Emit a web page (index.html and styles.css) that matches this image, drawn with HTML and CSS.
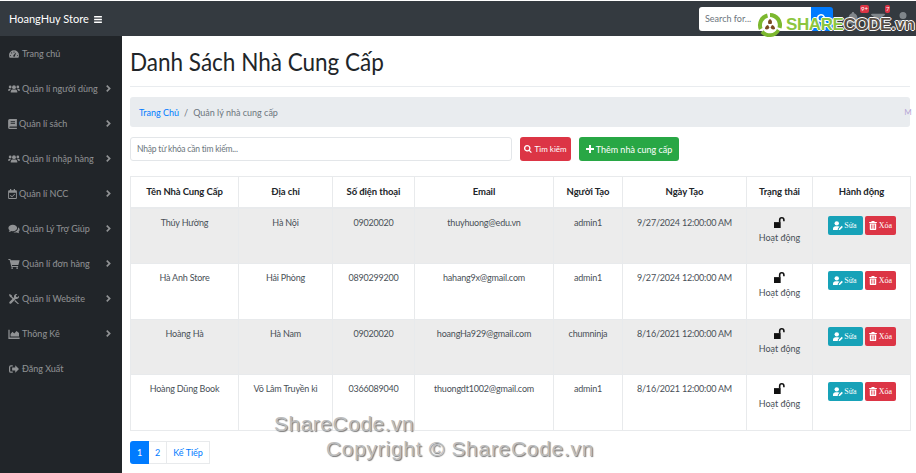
FILE: index.html
```html
<!DOCTYPE html>
<html lang="en">
<head>
    <meta charset="UTF-8">
    <meta name="viewport" content="width=device-width, initial-scale=1.0">
    <title>Danh Sách Nhà Cung Cấp</title>
    <link rel="stylesheet" href="styles.css">
</head>
<body>
    <svg class="sprites" width="0" height="0">
        <symbol id="i-gauge" viewBox="0 0 16 16"><path d="M8 2a8 8 0 0 0-8 8c0 1.500.4 2.800 1 4h14c.6-1.200 1-2.500 1-4a8 8 0 0 0-8-8zm-.7 1.800h1.400v2H7.300zM3 10.800H1.500V9.400H3zm1.400-3.400-1.400-1.400 1-1 1.400 1.400zM9.300 12a1.500 1.500 0 0 1-2.600-1.200L10.500 6l.6.300-1.800 5.700zm5.200-1.200H13V9.400h1.500z"/></symbol>
        <symbol id="i-users" viewBox="0 0 20 16"><circle cx="10" cy="5" r="3.200"/><circle cx="3.600" cy="4.600" r="2.300"/><circle cx="16.400" cy="4.600" r="2.300"/><path d="M4.500 14v-1.500C4.500 10 6.500 9 8 9h4c1.500 0 3.500 1 3.500 3.500V14zM0 11c0-2 1-3.500 3-3.500 1 0 1.600.3 2 .7-1 .8-1.800 1.800-1.900 2.800zM20 11c0-2-1-3.500-3-3.500-1 0-1.600.3-2 .7 1 .8 1.800 1.800 1.900 2.800z"/></symbol>
        <symbol id="i-book" viewBox="0 0 14 16"><path d="M2.500 0H14v12H3a1 1 0 0 0 0 2h11v2H2.500A2.500 2.500 0 0 1 0 13.500v-11A2.500 2.500 0 0 1 2.500 0zM4 3v1.500h7V3zm0 3v1.500h7V6z"/></symbol>
        <symbol id="i-check" viewBox="0 0 14 16"><path d="M3 0h2v2h4V0h2v2h1.500A1.500 1.500 0 0 1 14 3.500v11a1.500 1.500 0 0 1-1.500 1.500h-11A1.500 1.500 0 0 1 0 14.500v-11A1.500 1.500 0 0 1 1.500 2H3zM1.500 6v8.500h11V6zm8.700 1.400 1 1-4.900 4.800L3 10.700l1-1 2.300 1.700z"/></symbol>
        <symbol id="i-chat" viewBox="0 0 18 16"><path d="M7 1c3.900 0 7 2.300 7 5.200s-3.100 5.200-7 5.200c-.8 0-1.500-.1-2.200-.3C3.500 12 2 12.500.5 12.500c.8-.8 1.300-1.700 1.400-2.600C.7 8.900 0 7.600 0 6.200 0 3.300 3.100 1 7 1z"/><path d="M15.300 5.200C17 6 18 7.500 18 9c0 1.300-.7 2.500-1.800 3.400.1.800.6 1.600 1.300 2.300-1.300 0-2.700-.5-3.800-1.300-.6.200-1.300.3-2 .3-1.400 0-2.700-.4-3.700-1 4.300-.1 7.500-3 7.500-6.500z"/></symbol>
        <symbol id="i-cart" viewBox="0 0 18 16"><path d="M0 0h3.200l.5 2H18l-2 7.500H5.600l.4 1.700h9.600v1.500H4.800L2 1.500H0z"/><circle cx="6" cy="14.500" r="1.500"/><circle cx="14" cy="14.500" r="1.500"/></symbol>
        <symbol id="i-tools" viewBox="0 0 16 16"><path d="M1 0l3.500 2v1.700l3 3-1.500 1.500-3-3H2L0 1.500zM12 0c.5 0 .9.100 1.300.2L11 2.500 11.500 4.500l2 .5 2.300-2.300c.1.400.2.800.2 1.300a4 4 0 0 1-5.300 3.800L3.500 15a1.700 1.700 0 0 1-2.500-2.500l7.200-7.200A4 4 0 0 1 12 0zM10 9.500l5.500 5.500a.7.700 0 0 1 0 1h-1.500L8.500 11z"/></symbol>
        <symbol id="i-chart" viewBox="0 0 18 16"><path d="M0 1h2v12.500h16V16H0zM3.500 12V8l3-3.500 3 2.500L13 3l4 3.500V12z"/></symbol>
        <symbol id="i-out" viewBox="0 0 16 16"><path d="M6 2H3a3 3 0 0 0-3 3v6a3 3 0 0 0 3 3h3v-2H3a1 1 0 0 1-1-1V5a1 1 0 0 1 1-1h3zM10 2l6 6-6 6v-3.500H5v-5h5z"/></symbol>
        <symbol id="i-chev" viewBox="0 0 8 12"><path d="M2 0 8 6l-6 6-2-2 4-4-4-4z"/></symbol>
        <symbol id="i-search" viewBox="0 0 16 16"><path d="M6.500 0a6.500 6.500 0 0 1 5.200 10.400l4 4-1.800 1.600-4-4A6.500 6.500 0 1 1 6.500 0zm0 2.500a4 4 0 1 0 0 8 4 4 0 0 0 0-8z"/></symbol>
        <symbol id="i-plus" viewBox="0 0 14 14"><path d="M5.300 0h3.400v5.300H14v3.400H8.700V14H5.300V8.700H0V5.300h5.300z"/></symbol>
        <symbol id="i-lock" viewBox="0 0 14 14"><path d="M0 6.500h8.500V14H0z"/><path d="M6.200 6.800V3.700a3.700 3.700 0 0 1 7.400 0v1.600h-2V3.700a1.700 1.700 0 0 0-3.400 0v3.100z"/></symbol>
        <symbol id="i-edit" viewBox="0 0 16 14"><circle cx="6" cy="3.500" r="3.500"/><path d="M0 14v-2c0-2.500 2-4 4-4h4c1 0 1.800.3 2.500.8L8 11.500l-.5 2.500zM9 14l.4-2 4.600-4.600 1.800 1.800L11 14z"/></symbol>
        <symbol id="i-trash" viewBox="0 0 12 14"><path d="M4 0h4l.7 1.500H12V3H0V1.500h3.300zM1 4h10v9a1 1 0 0 1-1 1H2a1 1 0 0 1-1-1zm2 1.500V12h1V5.500zm2.500 0V12h1V5.500zm2.500 0V12h1V5.500z"/></symbol>
        <symbol id="i-bars" viewBox="0 0 10 9"><path d="M0 0h10v1.800H0zM0 3.600h10v1.800H0zM0 7.200h10V9H0z"/></symbol>
        <symbol id="i-bell" viewBox="0 0 14 16"><path d="M7 0c.8 0 1.300.6 1.300 1.300C10.700 2 12 4 12 6.500c0 3 1 4.500 2 5.500v1H0v-1c1-1 2-2.500 2-5.500C2 4 3.300 2 5.700 1.300 5.700.6 6.200 0 7 0zM5 14h4a2 2 0 0 1-4 0z"/></symbol>
        <symbol id="i-mail" viewBox="0 0 16 12"><path d="M0 1.500A1.500 1.500 0 0 1 1.500 0h13A1.500 1.500 0 0 1 16 1.500L8 6.500 0 1.500zM0 3.500l8 5 8-5v7a1.500 1.500 0 0 1-1.500 1.500h-13A1.500 1.500 0 0 1 0 10.500z"/></symbol>
        <symbol id="i-user" viewBox="0 0 14 16"><path d="M7 0a4 4 0 1 1 0 8 4 4 0 0 1 0-8zM3 9h8a3 3 0 0 1 3 3v4H0v-4a3 3 0 0 1 3-3z"/></symbol>
    </svg>

    <header class="topbar">
        <div class="brand">HoangHuy Store <svg class="bars"><use href="#i-bars"/></svg></div>
        <div class="topsearch">
            <span class="topsearch-input">Search for...</span>
            <span class="topsearch-btn"><svg><use href="#i-search"/></svg></span>
        </div>
        <div class="topicons">
            <span class="top-icon"><svg><use href="#i-bell"/></svg><span class="badge">9+</span></span>
            <span class="top-icon"><svg><use href="#i-mail"/></svg><span class="badge">7</span></span>
            <span class="top-icon"><svg><use href="#i-user"/></svg></span>
        </div>
    </header>

    <div class="main">
        <nav class="sidebar">
            <a class="nav-item"><svg class="nav-icon"><use href="#i-gauge"/></svg>Trang chủ</a>
            <a class="nav-item"><svg class="nav-icon"><use href="#i-users"/></svg>Quản lí người dùng<svg class="chev"><use href="#i-chev"/></svg></a>
            <a class="nav-item"><svg class="nav-icon narrow"><use href="#i-book"/></svg>Quản lí sách<svg class="chev"><use href="#i-chev"/></svg></a>
            <a class="nav-item"><svg class="nav-icon"><use href="#i-users"/></svg>Quản lí nhập hàng<svg class="chev"><use href="#i-chev"/></svg></a>
            <a class="nav-item"><svg class="nav-icon narrow"><use href="#i-check"/></svg>Quản lí NCC<svg class="chev"><use href="#i-chev"/></svg></a>
            <a class="nav-item"><svg class="nav-icon"><use href="#i-chat"/></svg>Quản Lý Trợ Giúp<svg class="chev"><use href="#i-chev"/></svg></a>
            <a class="nav-item"><svg class="nav-icon"><use href="#i-cart"/></svg>Quản lí đơn hàng<svg class="chev"><use href="#i-chev"/></svg></a>
            <a class="nav-item"><svg class="nav-icon"><use href="#i-tools"/></svg>Quản lí Website<svg class="chev"><use href="#i-chev"/></svg></a>
            <a class="nav-item"><svg class="nav-icon"><use href="#i-chart"/></svg>Thông Kê<svg class="chev"><use href="#i-chev"/></svg></a>
            <a class="nav-item"><svg class="nav-icon"><use href="#i-out"/></svg>Đăng Xuất</a>
        </nav>

        <section class="content">
            <h1 class="title"><span class="title-text">Danh Sách Nhà Cung Cấp</span></h1>
            <ol class="breadcrumb">
                <li class="crumb-link">Trang Chủ</li>
                <li class="crumb-sep">/</li>
                <li>Quản lý nhà cung cấp</li>
            </ol>

            <div class="filter">
                <div class="filter-input">Nhập từ khóa cần tìm kiếm...</div>
                <button class="btn btn-find"><svg><use href="#i-search"/></svg>Tìm kiếm</button>
                <button class="btn btn-add"><svg><use href="#i-plus"/></svg>Thêm nhà cung cấp</button>
            </div>

            <table class="list">
                <colgroup>
                    <col class="c-name"><col class="c-addr"><col class="c-phone"><col class="c-mail"><col class="c-user"><col class="c-date"><col class="c-status"><col class="c-act">
                </colgroup>
                <thead>
                    <tr><th>Tên Nhà Cung Cấp</th><th>Địa chỉ</th><th>Số điện thoại</th><th>Email</th><th>Người Tạo</th><th>Ngày Tạo</th><th>Trạng thái</th><th>Hành động</th></tr>
                </thead>
                <tbody>
                    <tr class="odd">
                        <td>Thúy Hường</td><td>Hà Nội</td><td>09020020</td><td>thuyhuong@edu.vn</td><td>admin1</td><td>9/27/2024 12:00:00 AM</td>
                        <td class="cell-tight"><svg class="lock"><use href="#i-lock"/></svg><div>Hoạt động</div></td>
                        <td class="cell-tight"><div class="acts"><button class="mini mini-edit"><svg><use href="#i-edit"/></svg>Sửa</button><button class="mini mini-del"><svg><use href="#i-trash"/></svg>Xóa</button></div></td>
                    </tr>
                    <tr>
                        <td>Hà Anh Store</td><td>Hải Phòng</td><td>0890299200</td><td>hahang9x@gmail.com</td><td>admin1</td><td>9/27/2024 12:00:00 AM</td>
                        <td class="cell-tight"><svg class="lock"><use href="#i-lock"/></svg><div>Hoạt động</div></td>
                        <td class="cell-tight"><div class="acts"><button class="mini mini-edit"><svg><use href="#i-edit"/></svg>Sửa</button><button class="mini mini-del"><svg><use href="#i-trash"/></svg>Xóa</button></div></td>
                    </tr>
                    <tr class="odd">
                        <td>Hoàng Hà</td><td>Hà Nam</td><td>09020020</td><td>hoangHa929@gmail.com</td><td>chumninja</td><td>8/16/2021 12:00:00 AM</td>
                        <td class="cell-tight"><svg class="lock"><use href="#i-lock"/></svg><div>Hoạt động</div></td>
                        <td class="cell-tight"><div class="acts"><button class="mini mini-edit"><svg><use href="#i-edit"/></svg>Sửa</button><button class="mini mini-del"><svg><use href="#i-trash"/></svg>Xóa</button></div></td>
                    </tr>
                    <tr>
                        <td>Hoàng Dũng Book</td><td>Võ Lâm Truyền kì</td><td>0366089040</td><td>thuongdt1002@gmail.com</td><td>admin1</td><td>8/16/2021 12:00:00 AM</td>
                        <td class="cell-tight"><svg class="lock"><use href="#i-lock"/></svg><div>Hoạt động</div></td>
                        <td class="cell-tight"><div class="acts"><button class="mini mini-edit"><svg><use href="#i-edit"/></svg>Sửa</button><button class="mini mini-del"><svg><use href="#i-trash"/></svg>Xóa</button></div></td>
                    </tr>
                </tbody>
            </table>

            <div class="pager">
                <span class="page active">1</span><span class="page">2</span><span class="page">Kế Tiếp</span>
            </div>
        </section>
    </div>

    <!-- watermark sits over the page -->
    <div class="logo">
        <svg class="logo-mark" viewBox="0 0 28 28">
            <circle cx="14" cy="14" r="10.500" fill="#fff"/>
            <path d="M14 2a12 12 0 0 1 11.500 15.500l-4-1.200A8 8 0 0 0 14 6z" fill="#7cb82f"/>
            <path d="M24 20a12 12 0 0 1-19.500 2l3-2.800A8 8 0 0 0 21 18z" fill="#7cb82f"/>
            <path d="M3 19A12 12 0 0 1 11 2.500l1 4A8 8 0 0 0 6.500 17z" fill="#7cb82f"/>
            <path d="M14 8c2 1 2.500 3 1.500 5h-3C11.500 11 12 9 14 8zM9 18c0-2 1-3.500 3-4l1.500 2.500C12.500 18.500 11 19 9 18zM19 18c-2 1-3.500.5-4.500-1.500L16 14c2 .5 3 2 3 4z" fill="#7a4a22"/>
        </svg>
        <span class="logo-share">SHARE</span><span class="logo-code">CODE.vn</span>
    </div>
    <div class="mark mark-1">ShareCode.vn</div>
    <div class="mark mark-2">Copyright © ShareCode.vn</div>
    <div class="corner-tag">M</div>
</body>
</html>
```

FILE: styles.css
```css
* {
    margin: 0;
    padding: 0;
    box-sizing: border-box;
}

body {
    background: #fff;
    color: #212529;
    font-family: Lato, "Noto Sans", sans-serif;
    font-size: 9px;
    height: 473px;
    overflow: hidden;
}

.sprites {
    position: absolute;
}

svg {
    fill: currentColor;
}

/* top bar */
.topbar {
    height: 35px;
    margin-top: 1px;
    background: #343a40;
    display: flex;
    align-items: center;
    padding: 0 0 0 9px;
}

.brand {
    color: #fff;
    font-size: 11px;
    flex: 1;
}

.bars {
    width: 8px;
    height: 7px;
    margin-left: 2px;
}

.topsearch {
    display: flex;
    width: 134px;
    height: 24px;
    margin-right: 13px;
}

.topsearch-input {
    flex: 1;
    background: #fff;
    color: #6c757d;
    border-radius: 3px 0 0 3px;
    padding: 6px 6px;
}

.topsearch-btn {
    width: 22px;
    background: #007bff;
    color: #fff;
    border-radius: 0 3px 3px 0;
    display: flex;
    align-items: center;
    justify-content: center;
}

.topsearch-btn svg {
    width: 10px;
    height: 10px;
}

.topicons {
    width: 70px;
    display: flex;
    gap: 11px;
    align-self: stretch;
    align-items: center;
}

.top-icon {
    position: relative;
    width: 14px;
    height: 14px;
    color: #80868b;
}

.top-icon svg {
    width: 14px;
    height: 14px;
}

.badge {
    position: absolute;
    top: -7px;
    left: 14px;
    background: #dc3545;
    color: #fff;
    font-size: 6px;
    line-height: 8px;
    padding: 0 1px;
    border-radius: 2px;
}

/* sidebar */
.main {
    display: flex;
    height: 437px;
}

.sidebar {
    width: 122px;
    background: #212529;
    flex: none;
}

.nav-item {
    height: 35px;
    display: flex;
    align-items: center;
    padding-left: 8px;
    color: rgba(255, 255, 255, 0.5);
    white-space: nowrap;
}

.nav-icon {
    width: 12px;
    height: 10px;
    margin-right: 2px;
    flex: none;
}

.nav-icon.narrow {
    width: 9px;
}

.chev {
    width: 5px;
    height: 7px;
    position: absolute;
    left: 106px;
}

/* content */
.content {
    flex: 1;
    padding: 0 6px 0 8px;
    min-width: 0;
}

.title {
    font-size: 25px;
    font-weight: 400;
    line-height: 50px;
    height: 51px;
    border-bottom: 1px solid #e9ecef;
}

/* the heading in the shot is squeezed, no installed font is that narrow */
.title-text {
    display: inline-block;
    transform: scaleX(0.9);
    transform-origin: left center;
    white-space: nowrap;
}

.breadcrumb {
    list-style: none;
    display: flex;
    align-items: center;
    gap: 5px;
    margin-top: 10px;
    height: 30px;
    background: #e9ecef;
    border-radius: 3px;
    padding: 0 9px;
    color: #6c757d;
}

.crumb-link {
    color: #007bff;
}

.filter {
    display: flex;
    margin-top: 10px;
    height: 24px;
}

.filter-input {
    width: 382px;
    border: 1px solid #e3e6e9;
    border-radius: 3px;
    padding: 6px 6px;
    color: #6c757d;
    font-size: 8.500px;
    letter-spacing: -0.2px;
}

.btn {
    height: 24px;
    border: 0;
    border-radius: 3px;
    color: #fff;
    font-family: inherit;
    font-size: 8px;
    display: flex;
    align-items: center;
    justify-content: center;
}

.btn svg {
    width: 8px;
    height: 8px;
    margin-right: 2px;
}

.btn-find {
    width: 51px;
    margin-left: 8px;
    background: #dc3545;
}

.btn-add {
    width: 100px;
    margin-left: 8px;
    background: #28a745;
    font-size: 9px;
}

/* table */
.list {
    margin-top: 15px;
    width: 780px;
    table-layout: fixed;
    border-collapse: collapse;
    text-align: center;
}

.c-name { width: 108px; }
.c-addr { width: 94px; }
.c-phone { width: 82px; }
.c-mail { width: 139px; }
.c-user { width: 69px; }
.c-date { width: 124px; }
.c-status { width: 66px; }
.c-act { width: 98px; }

.list th,
.list td {
    border: 1px solid #e8eaec;
    vertical-align: top;
    font-weight: 400;
}

.list th {
    height: 31px;
    font-size: 9.500px;
    font-weight: 700;
    letter-spacing: -0.1px;
    vertical-align: middle;
    border-bottom-width: 2px;
}

.list td {
    height: 55.750px;
    padding-top: 8px;
    color: #495057;
    letter-spacing: -0.2px;
}

.list td.cell-tight {
    padding-top: 7px;
    letter-spacing: 0;
}

.list tr.odd td {
    background: #ececec;
}

.lock {
    display: block;
    width: 11px;
    height: 11px;
    margin: 1px auto 4px;
    color: #111;
}

.acts {
    display: flex;
    justify-content: center;
    gap: 2px;
}

.mini {
    height: 19px;
    border: 0;
    border-radius: 2px;
    color: #fff;
    font-family: "Liberation Serif", serif;
    font-size: 8px;
    display: flex;
    align-items: center;
    justify-content: center;
    gap: 1px;
}

.mini svg {
    width: 10px;
    height: 9px;
}

.mini-edit {
    width: 35px;
    background: #17a2b8;
}

.mini-del {
    width: 31px;
    background: #dc3545;
}

/* pagination */
.pager {
    display: flex;
    margin-top: 10px;
    height: 23px;
}

.page {
    border: 1px solid #e8eaec;
    border-left-width: 0;
    color: #007bff;
    padding: 0 6px;
    line-height: 21px;
}

.page.active {
    width: 19px;
    background: #007bff;
    border: 0;
    color: #fff;
    border-radius: 3px 0 0 3px;
    text-align: center;
    line-height: 23px;
}

/* watermarks */
.logo {
    position: absolute;
    left: 756px;
    top: 11px;
    display: flex;
    align-items: center;
    height: 28px;
    font-family: "Liberation Sans", sans-serif;
    font-weight: 700;
    font-size: 17px;
    letter-spacing: -0.4px;
}

.logo-mark {
    width: 28px;
    height: 28px;
    margin-right: 2px;
}

.logo-share {
    color: #8cc63f;
    text-shadow: -1px 0 #fff, 1px 0 #fff, 0 -1px #fff, 0 1px #fff;
}

.logo-code {
    color: #5a4f45;
    text-shadow: -1px 0 #fff, 1px 0 #fff, 0 -1px #fff, 0 1px #fff;
}

.mark {
    position: absolute;
    font-family: "Liberation Sans", sans-serif;
    font-size: 21px;
    letter-spacing: 0.5px;
    color: #bdbdbd;
    text-shadow: 1px 1px 1px #777;
    white-space: nowrap;
}

.mark-1 {
    left: 274px;
    top: 412px;
}

.mark-2 {
    left: 326px;
    top: 437px;
    letter-spacing: 0.7px;
}

.corner-tag {
    position: absolute;
    left: 902px;
    top: 107px;
    width: 12px;
    height: 12px;
    color: #b7a6d6;
    font-size: 8px;
    text-align: center;
}
```
